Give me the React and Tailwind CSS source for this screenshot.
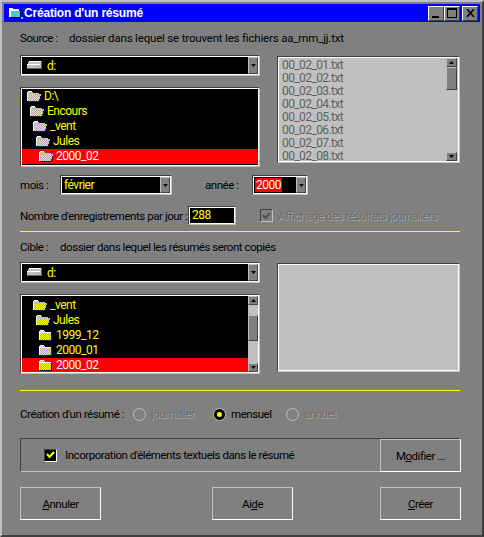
import React from 'react';

const files = ['00_02_01.txt', '00_02_02.txt', '00_02_03.txt', '00_02_04.txt', '00_02_05.txt', '00_02_06.txt', '00_02_07.txt', '00_02_08.txt'];

const sourceTree = [
  { name: 'D:\\', indent: 5 },
  { name: 'Encours', indent: 8 },
  { name: '_vent', indent: 11 },
  { name: 'Jules', indent: 14 },
  { name: '2000_02', indent: 17, selected: true },
];

const targetTree = [
  { name: '_vent', indent: 11 },
  { name: 'Jules', indent: 14 },
  { name: '1999_12', indent: 17, closed: true },
  { name: '2000_01', indent: 17, closed: true },
  { name: '2000_02', indent: 17, closed: true, selected: true },
];

const Dither = ({ id }) => (
  <pattern id={id} width="2" height="2" patternUnits="userSpaceOnUse">
    <rect width="2" height="2" fill="#ffff00" />
    <rect width="1" height="1" fill="#a8a8a8" />
    <rect x="1" y="1" width="1" height="1" fill="#a8a8a8" />
  </pattern>
);

const OpenFolder = ({ id }) => (
  <svg width="16" height="13" viewBox="0 0 16 13" className="shrink-0" shapeRendering="crispEdges">
    <defs><Dither id={id} /></defs>
    <path d="M1 2 H2 V1 H6 V2 H7 V3 H13 V4 H15 V6 H14 V10 H13 V11 H1 Z" fill="#c0c0c0" />
    <path d="M2 1 H6 V2 H2 Z M1 2 H2 V11 H1 Z" fill="#ffffff" />
    <path d="M4 5 H14 V6 H13 V8 H12 V11 H2 V8 H3 V6 H4 Z" fill={`url(#${id})`} />
    <path d="M3 11 H13 V12 H3 Z M13 9 H14 V11 H13 Z M14 7 H15 V9 H14 Z" fill="#202020" />
  </svg>
);

const ClosedFolder = ({ id }) => (
  <svg width="15" height="13" viewBox="0 0 15 13" className="shrink-0" shapeRendering="crispEdges">
    <defs><Dither id={id} /></defs>
    <path d="M1 2 H2 V1 H6 V2 H7 V3 H13 V11 H1 Z" fill="#c0c0c0" />
    <path d="M2 1 H6 V2 H2 Z M1 3 H13 V4 H1 Z M1 2 H2 V11 H1 Z" fill="#ffffff" />
    <rect x="2" y="4" width="11" height="7" fill={`url(#${id})`} />
    <path d="M2 11 H14 V12 H2 Z M13 4 H14 V11 H13 Z" fill="#202020" />
  </svg>
);

const DriveIcon = () => (
  <svg width="16" height="9" viewBox="0 0 16 9" className="shrink-0" shapeRendering="crispEdges">
    <path d="M3 0 H15 V8 H1 V3 H2 V1 H3 Z" fill="#c0c0c0" />
    <path d="M3 0 H15 V1 H3 Z M1 3 H14 V4 H1 Z" fill="#ffffff" />
    <path d="M1 7 H15 V8 H1 Z M15 0 H16 V8 H15 Z" fill="#606060" />
    <rect x="12" y="5" width="1" height="1" fill="#00c000" />
  </svg>
);

const Arrow = ({ up }) => (
  <svg width="5" height="3" viewBox="0 0 5 3">
    <path d={up ? 'M2.5 0 L5 3 H0 Z' : 'M0 0 H5 L2.5 3 Z'} fill="#000000" />
  </svg>
);

const ArrowButton = ({ up, className }) => (
  <div className={`flex items-center justify-center bg-[#808080] border border-t-[#c0c0c0] border-l-[#c0c0c0] border-r-[#404040] border-b-[#404040] ${className}`}>
    <Arrow up={up} />
  </div>
);

// bevelled frame used by every field: dark top/left, light bottom/right, white inside
const Sunken = ({ className, inner, children }) => (
  <div className={`border border-t-[#404040] border-l-[#404040] border-r-[#c0c0c0] border-b-[#c0c0c0] ${className}`}>
    <div className={`h-full border border-white ${inner}`}>{children}</div>
  </div>
);

const Combo = ({ className, children }) => (
  <Sunken className={className} inner="bg-black flex items-stretch">
    <div className="flex-1 flex items-center min-w-0 text-[#ffff00] text-[12px] tracking-[-0.5px]">{children}</div>
    <ArrowButton className="w-[10px] shrink-0" />
  </Sunken>
);

const DriveCombo = () => (
  <Combo className="h-[21px]">
    <span className="ml-[4px]"><DriveIcon /></span>
    <span className="ml-[5px]">d:</span>
  </Combo>
);

const Tree = ({ rows, scroll, top, id, children }) => (
  <Sunken className="h-[80px] mt-[11px]" inner="bg-black flex overflow-hidden">
    <div className={`flex-1 min-w-0 text-[12px] tracking-[-0.5px] ${top}`}>
      {rows.map((row, i) => (
        <div
          key={row.name}
          className={`h-[15px] flex items-center ${row.selected ? 'bg-[#ff0000] text-white' : 'text-[#ffff00]'}`}
          style={{ paddingLeft: row.indent - 1 }}
        >
          {row.closed ? <ClosedFolder id={`${id}c${i}`} /> : <OpenFolder id={`${id}o${i}`} />}
          <span className={`${row.closed ? 'ml-[3px]' : 'ml-[2px]'} leading-[15px]`}>{row.name}</span>
        </div>
      ))}
      {children}
    </div>
    {scroll && (
      <div className="w-[10px] shrink-0 bg-[#c0c0c0] flex flex-col">
        <ArrowButton up className="h-[9px]" />
        <div className="h-[10px]" />
        <div className="h-[26px] bg-[#808080] border border-t-[#c0c0c0] border-l-[#c0c0c0] border-r-[#404040] border-b-[#404040]" />
        <div className="flex-1" />
        <ArrowButton className="h-[9px]" />
      </div>
    )}
  </Sunken>
);

const FileList = () => (
  <Sunken className="w-[183px] h-[107px] mt-[1px]" inner="bg-[#c0c0c0] flex">
    <div className="flex-1 pl-[3px] pt-[1px] text-[#606060] text-[12px] tracking-[-0.6px]">
      {files.map((f) => (
        <div key={f} className="h-[13px] leading-[13px]">{f}</div>
      ))}
    </div>
    <div className="w-[11px] mr-[1px] flex flex-col">
      <ArrowButton up className="h-[9px]" />
      <div className="h-[23px] bg-[#808080] border border-t-[#c0c0c0] border-l-[#c0c0c0] border-r-[#404040] border-b-[#404040]" />
      <div className="flex-1" />
      <ArrowButton className="h-[9px]" />
    </div>
  </Sunken>
);

const Divider = ({ className }) => <div className={`h-px w-[440px] bg-[#ffff00] ${className}`} />;

const Disabled = ({ children, className }) => (
  <span className={`text-[#6a6a6a] [text-shadow:1px_1px_0_#a8a8a8] ${className}`}>{children}</span>
);

const Radio = ({ label, checked, className }) => (
  <div className={`flex items-center ${className}`}>
    <div className={`w-[13px] h-[13px] rounded-full border flex items-center justify-center ${checked ? 'border-[#c0c0c0] bg-black' : 'border-[#c0c0c0]'}`}>
      {checked && <div className="w-[5px] h-[5px] rounded-full bg-[#ffff00]" />}
    </div>
    {checked ? <span className="ml-[5px]">{label}</span> : <Disabled className="ml-[5px]">{label}</Disabled>}
  </div>
);

const Button = ({ className, children }) => (
  <button className={`w-[81px] flex items-center justify-center border border-t-[#c0c0c0] border-l-[#c0c0c0] border-r-white border-b-white ${className}`}>
    <span>{children}</span>
  </button>
);

const App = () => {
  return (
    <div className="w-[484px] h-[537px] bg-[#808080] border-2 border-t-[#c0c0c0] border-l-[#c0c0c0] border-r-[#404040] border-b-[#404040] p-[2px] text-black text-[11.5px] leading-4 tracking-[-0.45px] font-['Roboto','Liberation_Sans',sans-serif]">
      <div className="h-[18px] w-[476px] bg-[#0000ff] flex items-center pl-[4px] pr-[2px]">
        <svg width="15" height="14" viewBox="0 0 15 14" className="shrink-0" shapeRendering="crispEdges">
          <path d="M1 2 H5 V3 H11 V11 H1 Z" fill="#ffffff" />
          <path d="M3 5 H12 V11 H3 Z" fill="#40d0d0" />
          <path d="M3 12 H13 V6 H12 V11 H3 Z" fill="#000000" />
          <rect x="13" y="11" width="2" height="2" fill="#c0c0c0" />
        </svg>
        <span className="ml-[1px] font-bold text-white text-[12px] tracking-[-0.2px] font-['Liberation_Sans',sans-serif]">Création d'un résumé</span>
        <div className="ml-auto flex items-center">
          <div className="w-[16px] h-[15px] bg-[#808080] border border-t-white border-l-white border-r-[#404040] border-b-[#404040] flex items-end pl-[3px] pb-[2px]">
            <div className="w-[7px] h-[2px] bg-black" />
          </div>
          <div className="w-[16px] h-[15px] bg-[#808080] border border-t-white border-l-white border-r-[#404040] border-b-[#404040] flex items-center justify-center">
            <div className="w-[10px] h-[10px] border border-t-2 border-black" />
          </div>
          <div className="w-[16px] h-[15px] ml-[2px] bg-[#808080] border border-t-white border-l-white border-r-[#404040] border-b-[#404040] flex items-center justify-center">
            <svg width="9" height="8" viewBox="0 0 9 8">
              <path d="M1 0 L8 8 M8 0 L1 8" stroke="#000000" strokeWidth="1.6" />
            </svg>
          </div>
        </div>
      </div>

      <div className="pl-[16px]">
        <div className="mt-[8px] h-4 flex whitespace-pre">
          <span className="w-[49px] shrink-0">Source :</span>
          <span className="tracking-[-0.18px]">dossier dans lequel se trouvent les fichiers aa_mm_jj.txt</span>
        </div>

        <div className="mt-[9px] flex">
          <div className="w-[240px]">
            <DriveCombo />
            <Tree rows={sourceTree} id="src" />
          </div>
          <div className="ml-[17px]"><FileList /></div>
        </div>

        <div className="mt-[8px] h-[20px] flex items-center">
          <span className="w-[40px]">mois :</span>
          <Combo className="w-[112px] h-[20px]"><span className="ml-[2px]">février</span></Combo>
          <span className="ml-[33px] w-[47px]">année :</span>
          <Combo className="w-[56px] h-[20px]">
            <span className="ml-[1px] px-[1px] bg-[#ff0000] text-white leading-[14px]">2000</span>
          </Combo>
        </div>

        <div className="mt-[11px] h-[19px] flex items-center">
          <span className="w-[168px] shrink-0 whitespace-nowrap">Nombre d'enregistrements par jour :</span>
          <Sunken className="w-[48px] h-[19px]" inner="bg-black text-[#ffff00] text-[12px] pl-[2px] leading-[15px]">288</Sunken>
          <div className="ml-[24px] w-[13px] h-[13px] border border-t-[#404040] border-l-[#404040] border-r-[#c0c0c0] border-b-[#c0c0c0] flex items-center justify-center">
            <svg width="9" height="8" viewBox="0 0 9 8">
              <path d="M1 3 L3.5 6 L8 1" fill="none" stroke="#505050" strokeWidth="2" />
            </svg>
          </div>
          <Disabled className="ml-[5px]">Affichage des résultats journaliers</Disabled>
        </div>

        <Divider className="mt-[6px]" />

        <div className="mt-[7px] h-4 flex whitespace-pre">
          <span className="w-[40px] shrink-0">Cible :</span>
          <span>dossier dans lequel les résumés seront copiés</span>
        </div>

        <div className="mt-[7px] flex">
          <div className="w-[240px]">
            <DriveCombo />
            <Tree rows={targetTree} scroll top="pt-[2px]" id="dst">
              <div className="h-px w-[6px] ml-[18px] bg-[#c0c0c0]" />
            </Tree>
          </div>
          <div className="ml-[17px]">
            <Sunken className="w-[183px] h-[109px] mt-[1px]" inner="bg-[#c0c0c0]" />
          </div>
        </div>

        <Divider className="mt-[16px]" />

        <div className="mt-[15px] h-4 flex items-center">
          <span className="w-[113px] shrink-0 whitespace-nowrap">Création d'un résumé :</span>
          <Radio label="journalier" className="w-[80px]" />
          <Radio label="mensuel" checked className="w-[73px]" />
          <Radio label="annuel" />
        </div>

        <div className="mt-[16px] w-[440px] h-[34px] flex border border-t-[#404040] border-l-[#404040] border-r-[#808080] border-b-[#c0c0c0]">
          <div className="flex-1 flex items-center pl-[23px]">
            <div className="w-[13px] h-[13px] bg-black border border-t-[#404040] border-l-[#404040] border-r-white border-b-white flex items-center justify-center">
              <svg width="9" height="8" viewBox="0 0 9 8">
                <path d="M1 3 L3.5 6 L8 1" fill="none" stroke="#ffff00" strokeWidth="2" />
              </svg>
            </div>
            <span className="ml-[8px]">Incorporation d'éléments textuels dans le résumé</span>
          </div>
          <Button className="-mr-[2px] -mb-[1px]">M<span className="underline">o</span>difier ...</Button>
        </div>

        <div className="mt-[15px] h-[33px] flex">
          <Button><span className="underline">A</span>nnuler</Button>
          <Button className="ml-[111px]">Ai<span className="underline">d</span>e</Button>
          <Button className="ml-[87px]"><span className="underline">C</span>réer</Button>
        </div>
      </div>
    </div>
  );
};

export default App;
